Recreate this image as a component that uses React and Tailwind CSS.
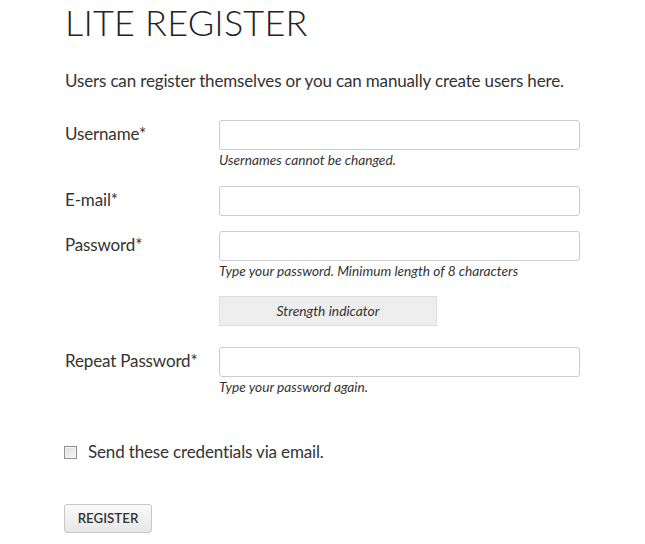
export default function App() {
  const font = { fontFamily: "Lato, 'Open Sans', sans-serif" };
  const input = "block w-[361px] h-[30px] border border-[#cccccc] rounded-[3px] bg-white";
  const hint = "text-[13.7px] italic leading-[16px] text-[#333] mt-[2px]";
  const label = "w-[154px] shrink-0 text-[17px] tracking-[-0.15px] leading-[22px] pt-[3px] text-[#333]";
  return (
    <div className="bg-white w-[645px] h-[544px] pl-[65px] text-[#333]" style={font}>
      <h1 className="text-[36px] font-light leading-[43px] pt-[1px] tracking-[0.2px] text-[#222]">LITE REGISTER</h1>
      <p className="text-[17px] tracking-[-0.15px] leading-[22px] mt-[26px]">Users can register themselves or you can manually create users here.</p>

      <div className="flex mt-[28px]">
        <div className={label}>Username*</div>
        <div>
          <div className={input}></div>
          <div className={hint}>Usernames cannot be changed.</div>
        </div>
      </div>

      <div className="flex mt-[18px]">
        <div className={label}>E-mail*</div>
        <div className={input}></div>
      </div>

      <div className="flex mt-[15px]">
        <div className={label}>Password*</div>
        <div>
          <div className={input}></div>
          <div className={hint}>Type your password. Minimum length of 8 characters</div>
          <div className="mt-[17px] w-[218px] h-[30px] bg-[#eeeeee] border border-[#dddddd] flex items-center justify-center text-[13.8px] italic">Strength indicator</div>
        </div>
      </div>

      <div className="flex mt-[21px]">
        <div className={label}>Repeat Password*</div>
        <div>
          <div className={input}></div>
          <div className={hint}>Type your password again.</div>
        </div>
      </div>

      <label className="flex items-center mt-[46px] h-[22px]">
        <span className="ml-[-1px] w-[13px] h-[13px] border border-[#8f8f8f] bg-gradient-to-br from-[#dcdcdc] to-[#fafafa] shadow-[inset_0_0_0_1px_#f4f4f4]"></span>
        <span className="ml-[11px] text-[17px] tracking-[-0.15px] leading-[22px]">Send these credentials via email.</span>
      </label>

      <button className="mt-[41px] ml-[-1px] w-[88px] h-[29px] border border-[#c8c8c8] rounded-[3px] bg-gradient-to-b from-[#fafafa] to-[#e6e6e6] text-[13.3px] font-semibold text-[#333] flex items-center justify-center">REGISTER</button>
    </div>
  );
}
